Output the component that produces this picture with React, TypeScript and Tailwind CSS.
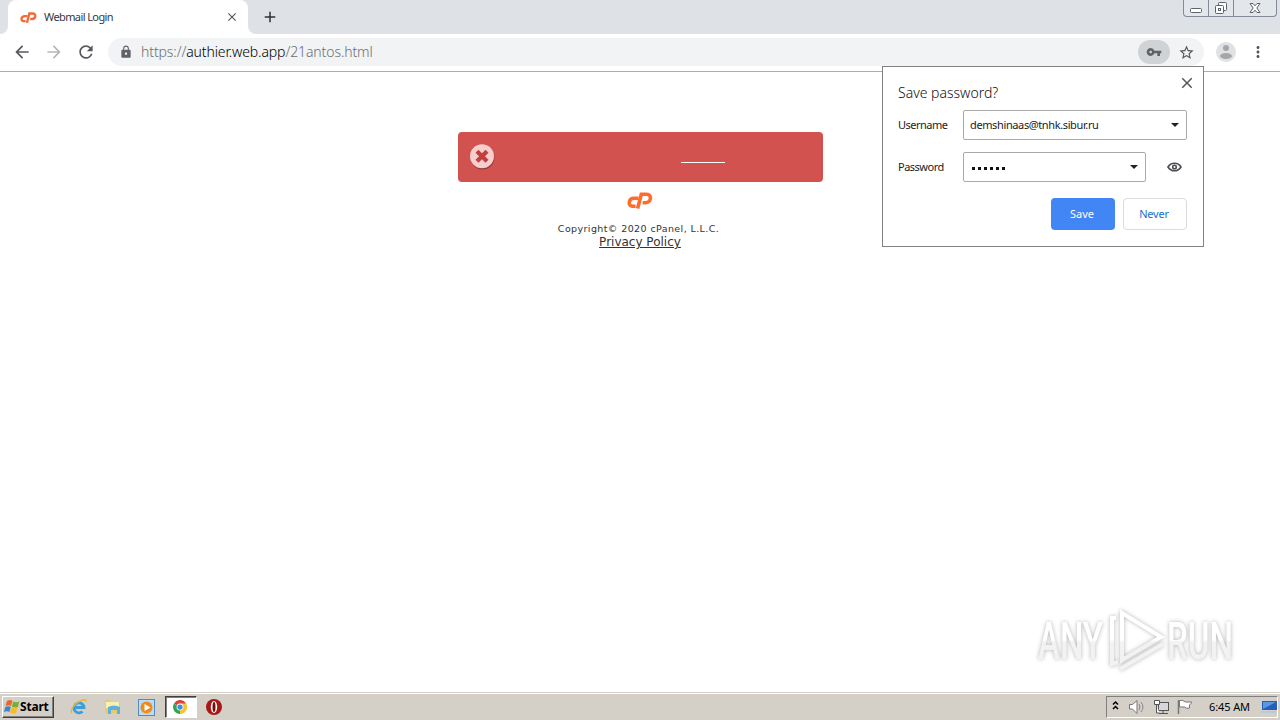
import type { ReactNode } from "react";
import { MdArrowBack, MdArrowForward, MdRefresh, MdLock, MdVpnKey, MdStarBorder, MdMoreVert, MdClose, MdAdd } from "react-icons/md";

function CpanelLogo({ className }: { className: string }) {
  return (
    <svg className={className} viewBox="0 0 26 17" fill="none" stroke="currentColor" strokeWidth="3.600">
      <path d="M11.500 6.300H7.200C1.300 6.300 .5 14.200 5.500 14.200H8.600" />
      <path d="M10.600 16.500L14.300 2.300H19.500C25.500 2.300 24.300 10.800 18.500 10.800H15.600" />
    </svg>
  );
}

function WindowButtons() {
  return (
    <div className="ml-auto mr-[3px] flex h-[17px] w-[94px] rounded-b-[4px] border border-t-0 border-[#858b96] bg-[#e3e6ea]">
      <svg className="h-4 w-full" viewBox="0 0 92 16" fill="none" stroke="#5d626c">
        <path d="M24.500 0V16M49.500 0V16" stroke="#858b96" />
        <rect x="6.500" y="8.500" width="11" height="4" rx="1" fill="#fff" />
        <rect x="34.500" y="2.500" width="8" height="8" rx="1" fill="#fff" />
        <rect x="31.500" y="5.500" width="8" height="8" rx="1" fill="#fff" />
        <rect x="34.500" y="8.500" width="2" height="2" />
        <path d="M66 3.500h3l2 2.300 2-2.300h3l-3.200 4.500 3.200 4.500h-3l-2-2.300-2 2.300h-3l3.200-4.500z" fill="#fff" />
      </svg>
    </div>
  );
}

function TabStrip() {
  return (
    <div className="flex h-[34px] bg-[#dee1e6]">
      <div className="flex w-2 items-end bg-white">
        <div className="h-full w-2 rounded-br-lg bg-[#dee1e6]" />
      </div>
      <div className="flex w-60 items-center rounded-t-lg bg-white pl-3 pr-[9px]">
        <CpanelLogo className="h-[11px] w-[17px] text-[#f26a38]" />
        <span className="ml-[7px] font-['Noto_Sans'] text-[11px] tracking-[-0.6px] text-[#35383b]">Webmail Login</span>
        <MdClose className="ml-auto h-[14px] w-[14px] text-[#55585c]" />
      </div>
      <div className="w-2 bg-white">
        <div className="h-full w-2 rounded-bl-lg bg-[#dee1e6]" />
      </div>
      <MdAdd className="ml-[5px] mt-2 h-[18px] w-[18px] text-[#2f3237]" />
      <WindowButtons />
    </div>
  );
}

function Toolbar() {
  return (
    <div className="flex h-[38px] items-center border-b border-[#aaacaf] bg-white pb-[1px]">
      <MdArrowBack className="ml-3 h-5 w-5 text-[#55585c]" />
      <MdArrowForward className="ml-3 h-5 w-5 text-[#b6b8bb]" />
      <MdRefresh className="ml-3 h-5 w-5 text-[#55585c]" />
      <div className="ml-3 flex h-7 w-[1096px] items-center rounded-full bg-[#f1f3f4] pl-[11px] pr-[9px]">
        <MdLock className="h-[14px] w-[14px] text-[#5f6368]" />
        <span className="ml-2 pb-[2px] font-['Noto_Sans'] text-[14px] font-light tracking-[-0.1px] text-[#6b6f74]">
          https://<span className="text-[#000]">authier.web.app</span>/21antos.html
        </span>
        <div className="ml-auto flex h-6 w-8 items-center justify-center rounded-full bg-[#d0d3d5]">
          <MdVpnKey className="h-4 w-4 text-[#5f6368]" />
        </div>
        <MdStarBorder className="ml-2 h-[17px] w-[17px] text-[#55585c]" />
      </div>
      <svg className="ml-3 h-5 w-5" viewBox="0 0 20 20">
        <circle cx="10" cy="10" r="10" fill="#e0e1e2" />
        <circle cx="10" cy="6" r="3" fill="#a4a6a8" />
        <ellipse cx="10" cy="14" rx="6" ry="3" fill="#a4a6a8" />
      </svg>
      <MdMoreVert className="ml-[13px] h-[18px] w-[18px] text-[#55585c]" />
    </div>
  );
}

function LoginNotice() {
  return (
    <main className="flex flex-1 flex-col items-center bg-white pt-[60px]">
      <div className="flex h-[50px] w-[365px] items-center rounded-[4px] bg-[#d2524f] pl-3">
        <svg className="h-[26px] w-[26px]" viewBox="0 0 26 26">
          <circle cx="12.500" cy="13.500" r="12" fill="#963b39" />
          <circle cx="12" cy="12.200" r="12" fill="#f5cecd" />
          <path d="M7 7.200l10 10M17 7.200l-10 10" stroke="#c2403e" strokeWidth="4.200" />
        </svg>
        <div className="ml-[185px] mt-[11px] h-px w-11 bg-white" />
      </div>
      <CpanelLogo className="mt-[10px] h-[17px] w-[26px] text-[#ff6c2c]" />
      <p className="mt-[14px] pr-[3px] font-['DejaVu_Sans'] text-[9.5px] leading-[12px] tracking-[0.4px] text-[#333]">Copyright© 2020 cPanel, L.L.C.</p>
      <a className="font-['DejaVu_Sans'] text-[12px] leading-[14px] text-[#333] underline">Privacy Policy</a>
    </main>
  );
}

function Field({ label, wide, children }: { label: string; wide?: boolean; children: ReactNode }) {
  return (
    <div className="flex h-[30px] items-center">
      <span className="w-[65px] font-['Noto_Sans'] text-[11px] tracking-[-0.5px] text-[#1c1c1c]">{label}</span>
      <div className={`flex h-[30px] items-center rounded-[2px] border border-[#aaa] pl-[6px] pr-[7px] ${wide ? "w-[224px]" : "w-[183px]"}`}>
        {children}
        <svg className="ml-auto h-1 w-2" viewBox="0 0 8 4"><path d="M0 0h8L4 4z" fill="#222" /></svg>
      </div>
      {!wide && (
        <svg className="ml-[21px] h-[10px] w-[15px]" viewBox="0 0 15 10" fill="none" stroke="#4d4f52">
          <path d="M1 5C4 0 11 0 14 5C11 10 4 10 1 5z" strokeWidth="1.700" />
          <circle cx="7.500" cy="5" r="1.800" strokeWidth="1.600" />
        </svg>
      )}
    </div>
  );
}

function SavePasswordBubble() {
  return (
    <div className="absolute left-[882px] top-[66px] flex h-[181px] w-[322px] flex-col border border-[#808285] bg-white pl-[15px] pr-4">
      <div className="flex h-[43px] justify-between">
        <h2 className="pt-4 font-['Noto_Sans'] text-[14px] font-light leading-5 text-[#111]">Save password?</h2>
        <MdClose className="-mr-[9px] mt-[7px] h-[18px] w-[18px] text-[#55585c]" />
      </div>
      <Field label="Username" wide>
        <span className="font-['Noto_Sans'] text-[11px] tracking-[-0.38px] text-[#1c1c1c]">demshinaas@tnhk.sibur.ru</span>
      </Field>
      <div className="h-3" />
      <Field label="Password">
        <div className="ml-[2px] mt-[3px] flex gap-[3px]">
          {[0, 1, 2, 3, 4, 5].map((n) => (
            <i key={n} className="h-[3px] w-[3px] bg-[#111]" />
          ))}
        </div>
      </Field>
      <div className="mt-4 flex justify-end gap-2 font-['Noto_Sans'] text-[11px]">
        <button className="h-8 w-16 rounded-[4px] bg-[#4285f4] pr-[2px] text-white">Save</button>
        <button className="h-8 w-16 rounded-[4px] border border-[#dadce0] pr-[2px] tracking-[-0.2px] text-[#1a6ed0]">Never</button>
      </div>
    </div>
  );
}

function Watermark() {
  return (
    <svg className="absolute left-[1030px] top-[600px] h-20 w-[250px] drop-shadow-[0_0_2px_rgba(0,0,0,0.3)]" viewBox="0 0 250 80">
      <defs>
        <linearGradient id="fade" gradientUnits="userSpaceOnUse" x1="0" y1="10" x2="0" y2="72">
          <stop offset="0.480" stopColor="#fff" />
          <stop offset="0.520" stopColor="#f2f2f2" />
        </linearGradient>
      </defs>
      <g fill="url(#fade)" fontFamily="Roboto" fontSize="51" fontWeight="500">
        <text x="8" y="59" textLength="65" lengthAdjust="spacingAndGlyphs">ANY</text>
        <text x="137" y="59" textLength="66" lengthAdjust="spacingAndGlyphs">RUN</text>
      </g>
      <g fill="none" stroke="url(#fade)" strokeWidth="4">
        <path d="M92 13L131 37L92 60z" />
        <path d="M86 18H82V64L88 62M90 69L133 44" />
      </g>
    </svg>
  );
}

function StartButton() {
  return (
    <div className="ml-[2px] flex h-[22px] w-[52px] items-center border border-b-[#404040] border-l-white border-r-[#404040] border-t-white bg-[#d4d0c8] pl-[1px] shadow-[inset_-1px_-1px_0_#808080]">
      <svg className="h-4 w-4 shrink-0" viewBox="0 0 16 16">
        <path d="M3 2q3-2 5.500 0L7 7Q4.500 5.500 1.500 7z" fill="#e8672b" />
        <path d="M9.300 2.500q3 1.500 6 0L13.800 8q-3 1.300-6-.4z" fill="#79ad35" />
        <path d="M1.300 8q3-1.500 5.500 0L5.300 13Q3 11.500 0 13z" fill="#3f82cd" />
        <path d="M7.500 8.500q3 1.500 6 0L12 14q-3 1.300-6-.4z" fill="#f3bb24" />
      </svg>
      <span className="font-['Noto_Sans'] text-[12px] font-bold tracking-[-0.2px] text-black">Start</span>
    </div>
  );
}

function QuickLaunch() {
  return (
    <div className="flex items-center">
      <svg className="ml-[16px] h-[18px] w-[18px]" viewBox="0 0 18 18" fill="none">
        <path d="M4.500 9.500h9.500a5 5 0 1 0-1.500 4" stroke="#3b9ddb" strokeWidth="2.800" />
        <path d="M2 15C-1 13 5 4 13 2q4-1 3 2" stroke="#e9b53a" strokeWidth="1.300" />
      </svg>
      <svg className="ml-4 h-[18px] w-[18px]" viewBox="0 0 18 18">
        <path d="M1 2h5l1 2h9v11H1z" fill="#e8cc6c" />
        <path d="M2 4h13v6H2z" fill="#faf0b4" />
        <path d="M4 9q6-3 12 0v7h-3v-4H7v4H4z" fill="#5cb2dc" />
      </svg>
      <svg className="ml-4 h-[17px] w-[17px]" viewBox="0 0 17 17">
        <rect x=".5" y=".5" width="16" height="16" fill="#bcdcf3" stroke="#518dc2" />
        <circle cx="8.500" cy="8.500" r="6" fill="#f08a19" />
        <path d="M6.500 5l6 3.500-6 3.500z" fill="#fff" />
      </svg>
      <div className="ml-[10px] flex h-[22px] w-[32px] items-center justify-center border border-b-white border-l-[#404040] border-r-white border-t-[#404040] bg-white pr-[2px] shadow-[inset_1px_1px_0_#808080]">
        <svg className="h-[14px] w-[14px]" viewBox="0 0 16 16">
          <path d="M8 8L1.100 4A8 8 0 0 1 15 4z" fill="#dc4437" />
          <path d="M8 8L15 4A8 8 0 0 1 8 16z" fill="#f6c52a" />
          <path d="M8 8V16A8 8 0 0 1 1.100 4z" fill="#32a457" />
          <path d="M8 4h7L12 10z" fill="#f6c52a" />
          <circle cx="8" cy="8" r="3.900" fill="#fff" />
          <circle cx="8" cy="8" r="3" fill="#4687e8" />
        </svg>
      </div>
      <svg className="ml-[9px] h-4 w-4" viewBox="0 0 16 16">
        <circle cx="8" cy="8" r="8" fill="#a91816" />
        <ellipse cx="8" cy="8" rx="3.200" ry="6" fill="#fff" />
        <ellipse cx="8" cy="8" rx="1.500" ry="5" fill="#761010" />
      </svg>
    </div>
  );
}

function Tray() {
  return (
    <div className="ml-auto mr-[2px] flex h-[22px] w-[172px] items-center border border-b-white border-l-[#808080] border-r-white border-t-[#808080]">
      <svg className="ml-[5px] h-[22px] w-20 shrink-0" viewBox="0 0 80 22" fill="none">
        <path d="M1 8.500l2.500-2.500 2.500 2.500M1 13l2.500-2.500L6 13" stroke="#000" strokeWidth="1.500" />
        <path d="M17.500 8.500h3L25 4.500v13l-4.500-4.500h-3z" fill="#fff" stroke="#777" />
        <path d="M27 8q2 3 0 6M29 6q4 5 0 10" stroke="#888" />
        <rect x="46.500" y="6.500" width="10" height="8" fill="#d8d8d8" stroke="#555" />
        <path d="M47 17.500h9M51 15v2" stroke="#555" />
        <path d="M42.500 4.500h5v4h-5zM44.500 9v8h3" fill="#fff" stroke="#555" />
        <path d="M66.500 4v14" stroke="#777" strokeWidth="1.500" />
        <path d="M67.500 4.500q3-1 6 1.500h7l-3 3 0 3q-3 1-5-1l-5 0z" fill="#fff" stroke="#777" />
      </svg>
      <span className="ml-[17px] whitespace-nowrap font-['Noto_Sans'] text-[11px] tracking-[-0.1px] text-black">6:45 AM</span>
      <svg className="ml-auto h-[14px] w-4" viewBox="0 0 16 14">
        <path d="M1 1h15v9H1z" fill="#245fbb" />
        <path d="M2 2h13L2 9z" fill="#5798e1" />
        <path d="M0 11h15v2H0z" fill="#b7c9dc" />
      </svg>
    </div>
  );
}

export default function App() {
  return (
    <div className="relative flex h-[720px] w-[1280px] flex-col overflow-hidden bg-white">
      <TabStrip />
      <Toolbar />
      <LoginNotice />
      <footer className="flex h-7 items-center border-t border-[#d4d0c8] bg-[#d4d0c8] pt-[1px] shadow-[inset_0_1px_0_#fff]">
        <StartButton />
        <QuickLaunch />
        <Tray />
      </footer>
      <SavePasswordBubble />
      <Watermark />
    </div>
  );
}
